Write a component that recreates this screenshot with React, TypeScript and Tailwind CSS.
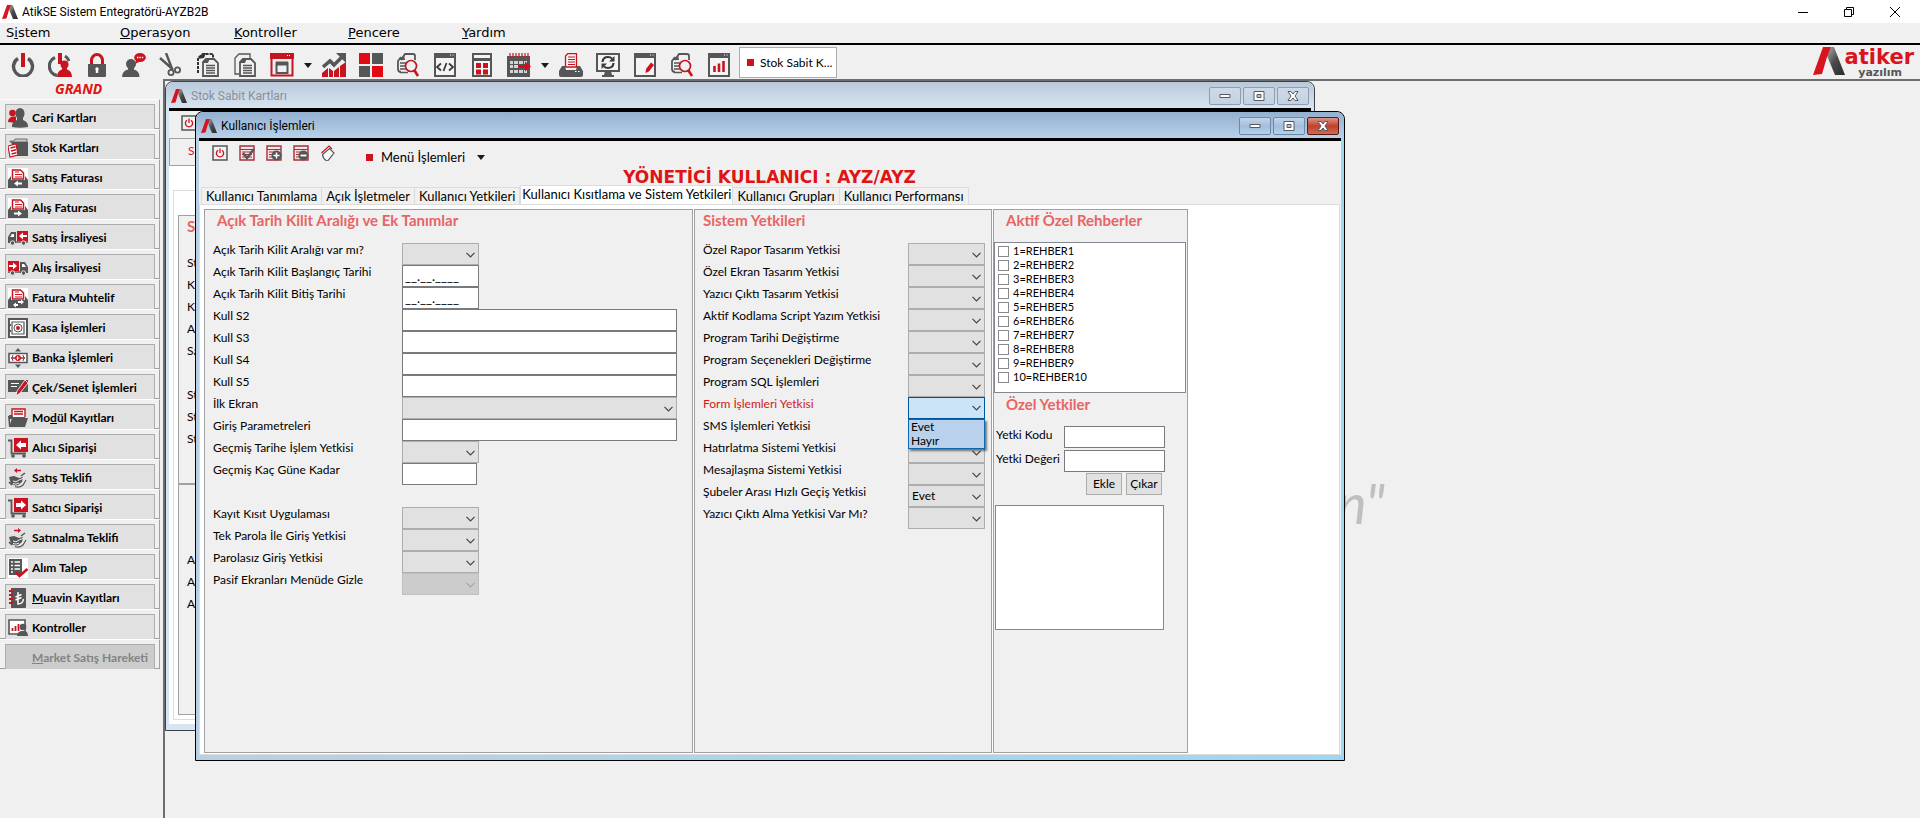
import { useState } from "react"
import type { ReactNode } from "react"

const GRAY = "#555657"
const RED = "#c8141f"

interface SvgProps {
    children: ReactNode
    size?: number
    box?: number
}

function Svg({ children, size = 24, box = 24 }: SvgProps) {
    return (
        <svg width={size} height={size} viewBox={`0 0 ${box} ${box}`} fill="none" aria-hidden="true" className="shrink-0">
            {children}
        </svg>
    )
}

function Mark({ width = 16, height = 14 }: { width?: number; height?: number }) {
    return (
        <svg width={width} height={height} viewBox="0 0 32 28" aria-hidden="true" className="shrink-0">
            <defs>
                <linearGradient id="markShade" x1="0" y1="0" x2="1" y2="1">
                    <stop offset="0" stopColor="#b9b9b9" />
                    <stop offset="0.5" stopColor="#4a4a4a" />
                    <stop offset="1" stopColor="#2b2b2b" />
                </linearGradient>
            </defs>
            <path d="M12 0h9l11 28H22L12 4z" fill="url(#markShade)" />
            <path d="M10 0h8l-4 10-5 17-9 1z" fill="#d8141f" />
        </svg>
    )
}

function Caret() {
    return (
        <svg width="8" height="5" viewBox="0 0 8 5" aria-hidden="true" className="shrink-0">
            <path d="M0 0h8L4 5z" fill="#1a1a1a" />
        </svg>
    )
}

// ---- main toolbar icons ----

const frame = <path d="M2 1h20v22H2z" stroke={GRAY} strokeWidth="2" fill="#f4f4f4" />
const frameTop = (
    <>
        <path d="M1 0h22v5H1z" fill={GRAY} />
        <path d="M17 2h1M19.500 2h1" stroke="#fff" strokeWidth="1" />
    </>
)
const sheets = (
    <>
        <path d="M10 6h8l4 4v13H7V9z" fill="#f0f0f0" stroke={GRAY} strokeWidth="1.800" />
        <path d="M6 10l4-5h4l-2 5z" fill={GRAY} />
        <path d="M10 12.500h9M10 15h9M10 17.500h9M10 20h9" stroke={GRAY} strokeWidth="1.500" />
    </>
)
const searchSheet = (
    <>
        <path d="M5 7l4-6h8q2 0 2 2v4M5 19q-3 0-3-3V8l3-4" stroke={GRAY} strokeWidth="1.800" />
        <path d="M3 7l5-5 1 5z" fill={GRAY} />
        <path d="M4 10h6M4 13h5M4 16h6M4 19.500h8" stroke={GRAY} strokeWidth="1.600" />
        <circle cx="15" cy="13" r="5.500" fill="#f0f0f0" stroke={RED} strokeWidth="1.700" />
        <path d="M18.500 17.500l3.500 5.500" stroke={RED} strokeWidth="2.600" />
    </>
)

const icons: Record<string, ReactNode> = {
    power: (
        <>
            <path d="M7 5.500a9.500 9.500 0 1 0 10 0" stroke={GRAY} strokeWidth="3.400" />
            <path d="M10 0h4v14h-4z" fill={RED} />
        </>
    ),
    userPower: (
        <>
            <path d="M7 4.500a9.500 9.500 0 0 0 2 18" stroke={GRAY} strokeWidth="3.200" />
            <path d="M10 0h4v11h-4z" fill={RED} />
            <path d="M17 3a9 9 0 0 1 4 5" stroke={GRAY} strokeWidth="3" />
            <circle cx="16.500" cy="11.500" r="4" fill={RED} />
            <path d="M9 24q0-6 5-7.500v-3h5v3q5 1.500 5 7.500z" fill={RED} />
        </>
    ),
    lock: (
        <>
            <path d="M6.500 12V7.500a5.500 6 0 0 1 11 0V12" stroke={RED} strokeWidth="3" />
            <path d="M3 11h18v12q0 1-1 1H4q-1 0-1-1z" fill={GRAY} />
            <path d="M10.800 17h2.400v3h-2.400z" fill="#fff" />
            <circle cx="12" cy="16" r="1.700" fill="#fff" />
        </>
    ),
    userChat: (
        <>
            <circle cx="9" cy="11" r="5" fill={GRAY} />
            <path d="M0 24q0-6 6-7.500V13h6v3.500q5.500 1.500 5.500 7.500z" fill={GRAY} />
            <ellipse cx="18" cy="4.500" rx="5.800" ry="4.500" fill={RED} />
            <path d="M14 7l-1 4 4-2z" fill={RED} />
            <path d="M15 4.500h1.400M17.400 4.500h1.400M19.800 4.500h1.400" stroke="#fff" strokeWidth="1.300" />
        </>
    ),
    cut: (
        <>
            <path d="M1 5l13 11.500M7 0l6.500 17" stroke={GRAY} strokeWidth="2.400" />
            <circle cx="12" cy="19.500" r="2.600" stroke={GRAY} strokeWidth="1.800" />
            <circle cx="18.500" cy="17" r="2.600" stroke={GRAY} strokeWidth="1.800" />
        </>
    ),
    copy: (
        <>
            <path d="M2 20V5l5-4h10v4" stroke="#333" strokeWidth="2" strokeDasharray="3 1" />
            <path d="M1 6l6-6h3L8 5z" fill="#333" />
            {sheets}
        </>
    ),
    paste: (
        <>
            <path d="M6 21H2V5l4-4h11v4" stroke={GRAY} strokeWidth="1.300" />
            {sheets}
        </>
    ),
    window: (
        <>
            <path d="M1.500 1.500h21v21h-21z" stroke={RED} strokeWidth="2" />
            <path d="M0 0h24v6H0z" fill={RED} />
            <path d="M17 2.500h1M19 2.500h1" stroke="#fff" />
            <path d="M6.500 10h11v10h-11z" stroke={GRAY} strokeWidth="2" />
            <path d="M6 8.500h12v4H6z" fill={GRAY} />
        </>
    ),
    trend: (
        <>
            <path d="M1 14L8 8l4 4 8-8" stroke={GRAY} strokeWidth="3.600" />
            <path d="M14 0h10v10z" fill={GRAY} />
            <path d="M0 24v-4l6-5v9zM7 24v-9l4 3v6zM12 24v-6l5-4v10zM18 24V13l6-4v15z" fill={RED} />
        </>
    ),
    tiles: (
        <>
            <path d="M0 0h11v11H0zM13 13h11v11H13z" fill="#df0a14" />
            <path d="M13 0h11v11H13zM0 13h11v11H0z" fill={GRAY} />
        </>
    ),
    search: searchSheet,
    code: (
        <>
            {frame}
            {frameTop}
            <path d="M8 10.500l-4 3.500 4 3.500M16 10.500l4 3.500-4 3.500M13.500 10l-3 8" stroke="#3a3a3a" strokeWidth="1.800" />
        </>
    ),
    calc: (
        <>
            <path d="M3 1h18v22H3z" fill="#f4f4f4" stroke={GRAY} strokeWidth="2" />
            <path d="M2 5h20v3H2z" fill={GRAY} />
            <path d="M6 10h5v5H6zM13 10h5v5h-5zM6 16.500h5v5H6zM13 16.500h5v5h-5z" fill={RED} />
        </>
    ),
    calendar: (
        <>
            <path d="M0 3h23v21H0z" fill={GRAY} />
            <path d="M3 0v4M6 0v4M9 0v4M12 0v4M15 0v4M18 0v4M21 0v4" stroke={RED} strokeWidth="1.200" />
            <path d="M3 8h3v3H3zM7 8h4v3H7zM12 8h4v3h-4zM17 8h3v3h-3zM3 12h3v3H3zM7 12h4v3H7zM3 17h3v3H3zM7 17h4v3H7zM12 17h4v3h-4zM17 17h3v3h-3z" fill="#d4d4d4" />
            <path d="M11 12h7V8.500l6 5-6 5V15h-7z" fill="#e30613" />
        </>
    ),
    printer: (
        <>
            <path d="M6.500 14V3l2.500-2.500h8.500V14z" fill="#f4f4f4" stroke={RED} strokeWidth="1.300" />
            <path d="M9 4h7M9 6.500h7M9 9h7M9 11.500h7" stroke={RED} strokeWidth="1.200" />
            <path d="M3 13h3l1 4h10l1-4h3l3 5v4q0 2-2 2H2q-2 0-2-2v-4z" fill={GRAY} />
            <path d="M16 18.500h1.500M19 18.500h1.500" stroke="#fff" />
        </>
    ),
    sync: (
        <>
            <path d="M1 1h22v17H1z" fill="#f4f4f4" stroke={GRAY} strokeWidth="2" />
            <path d="M9 18h6l1 4h2v2H6v-2h2z" fill={GRAY} />
            <path d="M6.500 9q.5-5 5.500-5 2.500 0 4 1.500M17.500 10q-.5 5-5.500 5-2.500 0-4-1.500" stroke="#3a3a3a" strokeWidth="2.200" />
            <path d="M18.500 3v5.500H13zM5.500 16v-5.500H11z" fill="#3a3a3a" />
        </>
    ),
    edit: (
        <>
            {frame}
            {frameTop}
            <path d="M18 9.500l3 2.500-5 6.500-3.500 1.500.5-4z" fill={RED} />
        </>
    ),
    report: (
        <>
            {frame}
            {frameTop}
            <path d="M7.500 19v-6M12 19V10.500M16.500 19V8" stroke={RED} strokeWidth="2.600" />
        </>
    ),
}

// ---- side menu icons, drawn on a 20 unit box ----

const receiptPrinter = (
    <>
        <path d="M0 0h20v20H0z" fill="#fff" />
        <path d="M4.500 11V2h8l3 3v6z" fill="#fff" stroke={RED} strokeWidth="1.500" />
        <path d="M7 4h4M7 6.500h7M7 9h7" stroke={RED} strokeWidth="1.200" />
        <path d="M0 20v-8l3-4v4h14V8l3 4v8z" fill={GRAY} />
    </>
)
const cart = (
    <>
        <path d="M0 2.500h3.500v13H18" stroke={GRAY} strokeWidth="1.800" />
        <circle cx="5" cy="18" r="1.800" fill={GRAY} />
        <circle cx="16" cy="18" r="1.800" fill={GRAY} />
        <path d="M6 0h14v14H6z" fill="#cf1020" />
    </>
)
const hands = (
    <>
        <path d="M1 9l5-1 5 2 4-1-1 5-5 4-6-2z" fill={GRAY} />
        <path d="M5 13q3 2 6-1l5-2M5 15.500q3 1.500 6-.5M8 18q5 1 9-6" stroke="#eee" strokeWidth="1" />
        <path d="M7 18.500q4 2 8-1.500l3-5" stroke={GRAY} strokeWidth="1.200" />
        <path d="M1 14l3 3M13 8l4-3" stroke={GRAY} strokeWidth="1.500" />
    </>
)
const truckWheels = (
    <>
        <path d="M0 14h20" stroke={GRAY} strokeWidth="1.500" />
        <circle cx="4.500" cy="15" r="2.200" fill={GRAY} stroke="#e0e0e0" />
        <circle cx="15.500" cy="15" r="2.200" fill={GRAY} stroke="#e0e0e0" />
    </>
)

const sideIcons: Record<string, ReactNode> = {
    people: (
        <>
            <circle cx="4.500" cy="5" r="3.300" fill={RED} />
            <path d="M0 14q0-4 4-5.500h4V15z" fill={RED} />
            <ellipse cx="12" cy="5.500" rx="4.500" ry="5.500" fill={GRAY} />
            <path d="M4 19q-.5-5 5-7V9h6v3q5.500 2 5 7-8 1.500-16 0z" fill={GRAY} />
        </>
    ),
    folder: (
        <>
            <path d="M2 3h4l1-2h12v3H2z" fill="#c9c9c9" stroke={GRAY} strokeWidth=".8" />
            <path d="M3 4h17v14H8z" fill={GRAY} />
            <path d="M0 8l8-2 2 11-8 2z" fill="#fff" stroke={RED} strokeWidth="1.200" />
            <path d="M2.500 10l5-1.200M3 13l5-1.200M3.500 16l5-1.200" stroke={RED} strokeWidth="1.400" />
        </>
    ),
    invoiceOut: (
        <>
            {receiptPrinter}
            <path d="M6 15.500l4-3v2h4v2h-4v2z" fill="#fff" />
        </>
    ),
    invoiceIn: (
        <>
            {receiptPrinter}
            <path d="M14 15.500l-4-3v2H6v2h4v2z" fill="#fff" />
        </>
    ),
    invoiceMisc: (
        <>
            {receiptPrinter}
            <path d="M10 13h3v-1.500l3 2.500-3 2.500V15h-3zM10 16H8v-1.500L5 17l3 2.500V18h2z" fill="#fff" />
        </>
    ),
    truckOut: (
        <>
            <path d="M9 3h11v10H9z" fill="#cf1020" />
            <path d="M11 8l4-3.500V7h4v2h-4v2.500z" fill="#fff" />
            <path d="M0 15V9l3-5h5v11z" fill={GRAY} />
            <path d="M2 9l2-3h2v3z" fill="#fff" />
            {truckWheels}
        </>
    ),
    truckIn: (
        <>
            <path d="M0 3h11v10H0z" fill="#cf1020" />
            <path d="M9 8L5 4.500V7H1v2h4v2.500z" fill="#fff" />
            <path d="M20 15V9l-3-5h-5v11z" fill={GRAY} />
            <path d="M18 9l-2-3h-2v3z" fill="#fff" />
            {truckWheels}
        </>
    ),
    safe: (
        <>
            <path d="M1 1h18v18H1z" fill="#fff" stroke={GRAY} strokeWidth="2" />
            <path d="M4 4h12v12H4z" stroke={GRAY} strokeWidth="1.200" />
            <circle cx="10" cy="10" r="4" fill="#fff" stroke={GRAY} strokeWidth="1" />
            <path d="M8.500 8.500l3 3M11.500 8.500l-3 3" stroke={RED} strokeWidth="1.800" />
            <path d="M2.500 6v2M2.500 12v2" stroke={GRAY} />
        </>
    ),
    bank: (
        <>
            <path d="M10 0l3 3.500H7zM10 20l3-3.500H7z" fill={GRAY} />
            <path d="M1 5.500h18v9H1z" fill="#fff" stroke={GRAY} strokeWidth="1.600" />
            <path d="M3 10q1.500 0 2-3M17 10q-1.500 0-2-3M3 10q1.500 0 2 3M17 10q-1.500 0-2 3" stroke={GRAY} />
            <circle cx="10" cy="10" r="3" fill={RED} />
            <path d="M4 10h3M13 10h3" stroke={RED} strokeWidth="1.500" />
            <path d="M9.500 8v4M8.500 10h3" stroke="#fff" strokeWidth=".8" />
        </>
    ),
    cheque: (
        <>
            <path d="M0 2h20v12H0z" fill={GRAY} />
            <path d="M3 5.500h8M3 8.500h6" stroke="#fff" strokeWidth="1.200" />
            <path d="M17 2l3 3-8 10-4 3 1-5z" fill={RED} stroke="#fff" strokeWidth=".8" />
        </>
    ),
    module: (
        <>
            <path d="M4 9V1h13v8" fill="#fff" stroke={RED} strokeWidth="1.400" />
            <path d="M6 3.500h9M6 6h9" stroke={RED} strokeWidth="1.400" />
            <path d="M1 7h3l1 2h12v2H1z" fill={GRAY} />
            <path d="M1 19l3-9h16l-3 9z" fill={GRAY} />
            <path d="M0 8h2v11H1z" fill={GRAY} />
        </>
    ),
    cartIn: (
        <>
            {cart}
            <path d="M8 7l5-4.500V5h5v4h-5v2.500z" fill="#fff" />
        </>
    ),
    cartOut: (
        <>
            {cart}
            <path d="M18 7l-5-4.500V5H8v4h5v2.500z" fill="#fff" />
        </>
    ),
    offerOut: (
        <>
            {hands}
            <path d="M6 2.500l3-2.500v1.700h4v1.600H9V5z" fill={RED} />
        </>
    ),
    offerIn: (
        <>
            {hands}
            <path d="M13 2.500L10 0v1.700H6v1.600h4V5z" fill={RED} />
        </>
    ),
    request: (
        <>
            <path d="M0 0h20v20H0z" fill="#fff" />
            <path d="M1 1h13v16H1z" fill={GRAY} />
            <path d="M3 4h2M6.500 4H12M3 7.500h2M6.500 7.500H12M3 11h2M6.500 11H12M3 14h2" stroke="#fff" strokeWidth="1.400" />
            <path d="M8 14.500l3.500 3.500 8-7" stroke={RED} strokeWidth="2.600" />
        </>
    ),
    ledger: (
        <>
            <path d="M3 0h14q1 0 1 1v18q0 1-1 1H3z" fill={GRAY} />
            <path d="M1 3h4M1 7h4M1 11h4M1 15h4" stroke={RED} strokeWidth="1.800" />
            <path d="M10 4v12q5 0 5.500-5M7.500 9l6-2.500M7.500 12l6-2.500" stroke="#fff" strokeWidth="1.500" />
        </>
    ),
    control: (
        <>
            <path d="M1 2h16v14H1z" fill="#fff" stroke={GRAY} strokeWidth="1.600" />
            <path d="M4.500 13v-3M7.500 13V8M10.500 13V6" stroke={RED} strokeWidth="1.800" />
            <circle cx="15" cy="9" r="3.300" fill={GRAY} />
            <path d="M9 18q0-4 4-5h4q3 1 3 5z" fill={GRAY} />
        </>
    ),
}

// ---- small form toolbar icons, 16 unit box ----

const gridSheet = (
    <>
        <path d="M1 1h14v14H1z" fill="#f6e3e3" stroke="#a3303a" strokeWidth="1.400" />
        <path d="M1 4.500h14M3 7h10M3 9.500h10M3 12h10" stroke="#a3303a" strokeWidth="1.200" />
    </>
)
const formPower = (
    <>
        <path d="M1 1h14v14H1z" stroke={GRAY} strokeWidth="1.500" />
        <path d="M6 5.200a3.600 3.600 0 1 0 4 0M8 3.500V8" stroke={RED} strokeWidth="1.300" />
    </>
)
const formIcons: { label: string; icon: ReactNode }[] = [
    { label: "Kapat", icon: formPower },
    {
        label: "Kaydet",
        icon: (
            <>
                {gridSheet}
                <path d="M4 8l4 5 7-9" stroke={GRAY} strokeWidth="2.400" />
            </>
        ),
    },
    {
        label: "Ekle",
        icon: (
            <>
                {gridSheet}
                <circle cx="10.500" cy="10.500" r="5" fill={GRAY} />
                <path d="M7.500 10.500h6M10.500 7.500v6" stroke="#fff" strokeWidth="1.500" />
            </>
        ),
    },
    {
        label: "Sil",
        icon: (
            <>
                {gridSheet}
                <circle cx="10.500" cy="10.500" r="5" fill={GRAY} />
                <path d="M7.500 10.500h6" stroke="#fff" strokeWidth="1.800" />
            </>
        ),
    },
    {
        label: "Temizle",
        icon: (
            <>
                <path d="M1.500 8l7.500-7 3 3" stroke={RED} strokeWidth="1.200" />
                <path d="M2.500 9.500l7-6 4.500 4.500-6 7.500q-1 .5-2 0-3-2-3.500-6z" fill="#f8f8f8" stroke={GRAY} strokeWidth="1.200" />
            </>
        ),
    },
]

const menus: [string, string, string][] = [
    ["S", "i", "stem"],
    ["", "O", "perasyon"],
    ["", "K", "ontroller"],
    ["", "P", "encere"],
    ["", "Y", "ardım"],
]

const toolbar: { id: string; label: string; menu?: boolean }[] = [
    { id: "power", label: "Çıkış" },
    { id: "userPower", label: "Oturumu kapat" },
    { id: "lock", label: "Kilitle" },
    { id: "userChat", label: "Mesaj" },
    { id: "cut", label: "Kes" },
    { id: "copy", label: "Kopyala" },
    { id: "paste", label: "Yapıştır" },
    { id: "window", label: "Pencereler", menu: true },
    { id: "trend", label: "Grafik" },
    { id: "tiles", label: "Modüller" },
    { id: "search", label: "Rapor ara" },
    { id: "code", label: "Script" },
    { id: "calc", label: "Hesap makinesi" },
    { id: "calendar", label: "Takvim", menu: true },
    { id: "printer", label: "Yazdır" },
    { id: "sync", label: "Güncelle" },
    { id: "edit", label: "Düzenle" },
    { id: "search", label: "İncele" },
    { id: "report", label: "Raporlar" },
]

const sideItems: { icon?: string; text: string; key?: string; disabled?: boolean }[] = [
    { icon: "people", text: "Cari Kartları" },
    { icon: "folder", text: "Stok Kartları" },
    { icon: "invoiceOut", text: "Satış Faturası" },
    { icon: "invoiceIn", text: "Alış Faturası" },
    { icon: "truckOut", text: "Satış İrsaliyesi" },
    { icon: "truckIn", text: "Alış İrsaliyesi" },
    { icon: "invoiceMisc", text: "Fatura Muhtelif" },
    { icon: "safe", text: "Kasa İşlemleri" },
    { icon: "bank", text: "Banka İşlemleri" },
    { icon: "cheque", text: "Çek/Senet İşlemleri" },
    { icon: "module", text: "Modül Kayıtları", key: "d" },
    { icon: "cartIn", text: "Alıcı Siparişi" },
    { icon: "offerOut", text: "Satış Teklifi" },
    { icon: "cartOut", text: "Satıcı Siparişi" },
    { icon: "offerIn", text: "Satınalma Teklifi" },
    { icon: "request", text: "Alım Talep" },
    { icon: "ledger", text: "Muavin Kayıtları", key: "M" },
    { icon: "control", text: "Kontroller" },
    { text: "Market Satış Hareketi", key: "M", disabled: true },
]

const tabs = [
    "Kullanıcı Tanımlama",
    "Açık İşletmeler",
    "Kullanıcı Yetkileri",
    "Kullanıcı Kısıtlama ve Sistem Yetkileri",
    "Kullanıcı Grupları",
    "Kullanıcı Performansı",
]

type Field = { label: string; kind: "select" | "wideSelect" | "date" | "text" | "short" | "off" } | null

const lockFields: Field[] = [
    { label: "Açık Tarih Kilit Aralığı var mı?", kind: "select" },
    { label: "Açık Tarih Kilit Başlangıç Tarihi", kind: "date" },
    { label: "Açık Tarih Kilit Bitiş Tarihi", kind: "date" },
    { label: "Kull S2", kind: "text" },
    { label: "Kull S3", kind: "text" },
    { label: "Kull S4", kind: "text" },
    { label: "Kull S5", kind: "text" },
    { label: "İlk Ekran", kind: "wideSelect" },
    { label: "Giriş Parametreleri", kind: "text" },
    { label: "Geçmiş Tarihe İşlem Yetkisi", kind: "select" },
    { label: "Geçmiş Kaç Güne Kadar", kind: "short" },
    null,
    { label: "Kayıt Kısıt Uygulaması", kind: "select" },
    { label: "Tek Parola İle Giriş Yetkisi", kind: "select" },
    { label: "Parolasız Giriş Yetkisi", kind: "select" },
    { label: "Pasif Ekranları Menüde Gizle", kind: "off" },
]

const systemRights = [
    "Özel Rapor Tasarım Yetkisi",
    "Özel Ekran Tasarım Yetkisi",
    "Yazıcı Çıktı Tasarım Yetkisi",
    "Aktif Kodlama Script Yazım Yetkisi",
    "Program Tarihi Değiştirme",
    "Program Seçenekleri Değiştirme",
    "Program SQL İşlemleri",
    "Form İşlemleri Yetkisi",
    "SMS İşlemleri Yetkisi",
    "Hatırlatma Sistemi Yetkisi",
    "Mesajlaşma Sistemi Yetkisi",
    "Şubeler Arası Hızlı Geçiş Yetkisi",
    "Yazıcı Çıktı Alma Yetkisi Var Mı?",
]

const guides = Array.from({ length: 10 }, (_, i) => `${i + 1}=REHBER${i + 1}`)

// underline the access key inside a caption
function Caption({ text, accessKey }: { text: string; accessKey?: string }) {
    const at = accessKey ? text.indexOf(accessKey) : -1
    if (at < 0) return <span>{text}</span>
    return (
        <span>
            {text.slice(0, at)}
            <u>{text[at]}</u>
            {text.slice(at + 1)}
        </span>
    )
}

function Select({ id, className, value = "", disabled }: { id: string; className: string; value?: string; disabled?: boolean }) {
    return (
        <span className={`relative block h-[22px] ${className}`}>
            <select
                id={id}
                disabled={disabled}
                defaultValue={value}
                className="block w-full h-full appearance-none border border-[#adadad] bg-[#e1e1e1] pl-[3px] text-black outline-none disabled:bg-[#cccccc] disabled:border-[#bfbfbf] disabled:opacity-100"
            >
                <option value=""></option>
                <option value="Evet">Evet</option>
                <option value="Hayır">Hayır</option>
            </select>
            <svg
                width="9"
                height="6"
                viewBox="0 0 9 6"
                fill="none"
                aria-hidden="true"
                className="absolute right-1 top-[9px] pointer-events-none"
            >
                <path d="M.5.800l4 4 4-4" stroke={disabled ? "#a6a6a6" : "#444"} strokeWidth="1.200" />
            </svg>
        </span>
    )
}

function WindowButtons({ active }: { active: boolean }) {
    const tone = active
        ? "border-[#6d87a8] bg-linear-to-b from-[#c3d6ea] via-[#a4bedb] to-[#b4cfea]"
        : "border-[#8d9db3] bg-linear-to-b from-[#cfdae6] to-[#c3d1e1]"
    const close = active ? "border-[#5a1a14] bg-linear-to-b from-[#dc9388] via-[#c0402c] to-[#cf6a50]" : tone
    const box = "w-8 h-[18px] flex items-center justify-center rounded-xs border"
    return (
        <div className="flex gap-0.5">
            <button aria-label="Simge durumuna küçült" className={`${box} ${tone}`}>
                <svg width="12" height="6" viewBox="0 0 12 6"><path d="M1 1.500h10v3H1z" fill="#fff" stroke="#555b66" /></svg>
            </button>
            <button aria-label="Ekranı kapla" className={`${box} ${tone}`}>
                <svg width="12" height="10" viewBox="0 0 12 10">
                    <path d="M1 .500h10v9H1z" fill="#fff" stroke="#555b66" />
                    <path d="M4 3.500h4v3H4z" fill="#b4c8de" stroke="#555b66" />
                </svg>
            </button>
            <button aria-label="Kapat" className={`${box} ${close}`}>
                <svg width="12" height="10" viewBox="0 0 12 10">
                    <path d="M1 .500h3l2 2.500 2-2.500h3L8 5l3 4.500H8L6 7 4 9.500H1L4 5z" fill="#fff" stroke="#555b66" />
                </svg>
            </button>
        </div>
    )
}

function Heading({ children, className = "" }: { children: ReactNode; className?: string }) {
    return <h2 className={`text-[15px] leading-5 font-bold text-[#e86464] ${className}`}>{children}</h2>
}

// stock card form, mostly hidden behind the active window
function StockWindow() {
    return (
        <section className="absolute left-0 top-0 w-[1150px] h-[650px] flex flex-col rounded-t-lg border border-[#3c4148] bg-[#d7e4f2] px-[3px] pb-1.5">
            <header className="h-[26px] shrink-0 flex items-center -mx-[3px] pl-[5px] pr-[5px] pt-0.5 rounded-t-lg bg-linear-to-b from-[#b9c9da] to-[#d8e4f1]">
                <Mark />
                <h2 className="flex-1 pl-1 text-xs text-[#8a8f96] font-['Roboto','Noto_Sans',sans-serif]">Stok Sabit Kartları</h2>
                <WindowButtons active={false} />
            </header>
            <div className="flex-1 flex flex-col border-t-[3px] border-black bg-[#f0f0f0]">
                <div className="h-[27px] pl-3 pt-1">
                    <Svg size={16} box={16}>{formPower}</Svg>
                </div>
                <div className="h-7 border border-[#a0a0a0] pl-[18px] text-xs leading-6 text-[#d02028]">S</div>
                <div className="flex-1 bg-white pt-6 pl-1 pb-1">
                    <div className="h-full flex flex-col border border-[#dcdcdc] pt-6 pl-1 pb-1">
                        <div className="h-[269px] border border-[#a0a0a0] bg-[#f0f0f0] pl-2">
                            <Heading>S</Heading>
                            <div className="pt-4 text-xs leading-[22px]">
                                {["St", "Kr", "Ka", "A", "Sa", "", "St", "St", "St"].map((text, i) => (
                                    <p key={i} className="h-[22px]">{text}</p>
                                ))}
                            </div>
                        </div>
                        <div className="flex-1 border border-[#a0a0a0] bg-[#f0f0f0] pl-2 pt-16 text-xs leading-[22px]">
                            {["A", "A", "A"].map((text, i) => (
                                <p key={i}>{text}</p>
                            ))}
                        </div>
                    </div>
                </div>
            </div>
        </section>
    )
}

function LockPanel() {
    return (
        <section className="w-[489px] border border-[#a0a0a0] bg-[#f0f0f0] pl-2">
            <Heading className="pl-1">Açık Tarih Kilit Aralığı ve Ek Tanımlar</Heading>
            <div className="pt-[13px]">
                {lockFields.map((field, i) => {
                    if (!field) return <div key={i} className="h-[22px]" />
                    const id = `kilit-${i}`
                    const input = "block h-[22px] border border-[#7a7a7a] bg-white px-0.5 outline-none"
                    return (
                        <div key={i} className="flex h-[22px]">
                            <label htmlFor={id} className="w-[189px] leading-[14px]">{field.label}</label>
                            {field.kind === "select" && <Select id={id} className="w-[77px]" />}
                            {field.kind === "off" && <Select id={id} className="w-[77px]" disabled />}
                            {field.kind === "wideSelect" && <Select id={id} className="w-[275px]" />}
                            {field.kind === "date" && <input id={id} defaultValue="__.__.____" className={`${input} w-[77px] text-[13px]`} />}
                            {field.kind === "text" && <input id={id} className={`${input} w-[275px]`} />}
                            {field.kind === "short" && <input id={id} className={`${input} w-[75px]`} />}
                        </div>
                    )
                })}
            </div>
        </section>
    )
}

function SystemPanel() {
    const [open, setOpen] = useState(true)
    const [right, setRight] = useState("")

    const pick = (value: string) => {
        setRight(value)
        setOpen(false)
    }

    return (
        <section className="w-[298px] border border-[#a0a0a0] bg-[#f0f0f0] pl-2">
            <Heading>Sistem Yetkileri</Heading>
            <div className="pt-[13px]">
                {systemRights.map((label, i) => {
                    const id = `sistem-${i}`
                    if (label !== "Form İşlemleri Yetkisi") {
                        return (
                            <div key={label} className="flex h-[22px]">
                                <label htmlFor={id} className="w-[205px] leading-[14px]">{label}</label>
                                <Select id={id} className="w-[77px]" value={label.startsWith("Şubeler") ? "Evet" : ""} />
                            </div>
                        )
                    }
                    return (
                        <div key={label} className="flex h-[22px]">
                            <label htmlFor={id} className="w-[205px] leading-[14px] text-[#d01820]">{label}</label>
                            <div className="relative w-[77px]">
                                <button
                                    id={id}
                                    onClick={() => setOpen(!open)}
                                    className="w-full h-[22px] flex items-center justify-between border border-[#005499] bg-[#cce4f7] pl-[3px] pr-[3px]"
                                >
                                    <span>{right}</span>
                                    <svg width="9" height="6" viewBox="0 0 9 6" fill="none" aria-hidden="true">
                                        <path d="M.5.800l4 4 4-4" stroke="#444" strokeWidth="1.200" />
                                    </svg>
                                </button>
                                {open && (
                                    <ul className="absolute left-0 top-[22px] z-10 w-full border border-[#0f66ad] bg-[#b9d1ea] pl-0.5 leading-[14px] shadow-[2px_2px_2px_rgba(0,0,0,0.5)]">
                                        {["Evet", "Hayır"].map((value) => (
                                            <li key={value}>
                                                <button onClick={() => pick(value)} className="block w-full text-left">{value}</button>
                                            </li>
                                        ))}
                                    </ul>
                                )}
                            </div>
                        </div>
                    )
                })}
            </div>
        </section>
    )
}

function GuidePanel() {
    const input = "w-[101px] h-[22px] border border-[#7a7a7a] bg-white px-0.5 outline-none"
    const button = "w-9 h-[22px] border border-[#adadad] bg-[#e1e1e1] text-center"
    return (
        <section className="w-[195px] border border-[#a0a0a0] bg-[#f0f0f0] pr-px">
            <Heading className="pl-3">Aktif Özel Rehberler</Heading>
            <div className="mt-3 h-[151px] border border-[#828790] bg-white pl-[3px] pt-px">
                {guides.map((guide) => (
                    <label key={guide} className="flex h-[14px] items-center gap-1 text-[11px] leading-[14px]">
                        <input type="checkbox" className="size-[11px] appearance-none border border-[#8a8a8a] bg-white checked:bg-[#7aa7d8]" />
                        {guide}
                    </label>
                ))}
            </div>
            <Heading className="pl-3 pt-px">Özel Yetkiler</Heading>
            <div className="flex flex-col gap-0.5 pl-0.5 pt-3">
                <div className="flex">
                    <label htmlFor="yetki-kodu" className="w-[68px] whitespace-nowrap leading-[18px]">Yetki Kodu</label>
                    <input id="yetki-kodu" className={input} />
                </div>
                <div className="flex">
                    <label htmlFor="yetki-degeri" className="w-[68px] whitespace-nowrap leading-[18px]">Yetki Değeri</label>
                    <input id="yetki-degeri" className={input} />
                </div>
            </div>
            <div className="flex gap-1 pl-[92px] pt-px">
                <button className={button}>Ekle</button>
                <button className={button}>Çıkar</button>
            </div>
            <textarea aria-label="Özel Yetkiler" className="ml-px mt-2.5 block w-[169px] h-[125px] resize-none border border-[#828790] bg-white outline-none" />
        </section>
    )
}

function UserWindow() {
    const [tab, setTab] = useState(3)

    return (
        <section className="absolute left-[30px] top-[30px] w-[1150px] h-[650px] flex flex-col rounded-t-lg border border-black bg-linear-to-r from-[#b9cfe4] to-[#9bd9f2] px-[3px] pb-[5px]">
            <header className="h-[26px] shrink-0 flex items-center -mx-[3px] pl-[5px] pr-[5px] pt-0.5 rounded-t-lg bg-linear-to-b from-[#93b0cf] to-[#b9d1ea]">
                <Mark />
                <h2 className="flex-1 pl-1 text-xs font-['Roboto','Noto_Sans',sans-serif]">Kullanıcı İşlemleri</h2>
                <WindowButtons active />
            </header>
            <div className="flex-1 min-h-0 flex flex-col border-t-[3px] border-black bg-[#f0f0f0] pr-px">
                <div className="flex h-6 items-start pl-[13px] pt-1">
                    <div className="flex gap-[11px]">
                        {formIcons.map(({ label, icon }) => (
                            <button key={label} aria-label={label}>
                                <Svg size={16} box={16}>{icon}</Svg>
                            </button>
                        ))}
                    </div>
                    <button className="ml-[30px] mt-1 flex items-center gap-2 text-[13px] leading-4">
                        <span className="size-[7px] bg-[#d0101c]" />
                        Menü İşlemleri
                        <span className="pl-1"><Caret /></span>
                    </button>
                </div>
                <h1 className="h-5 text-center text-[17px] leading-6 font-bold text-[#e01414] font-['DejaVu_Sans',sans-serif]">
                    YÖNETİCİ KULLANICI : AYZ/AYZ
                </h1>
                <div role="tablist" className="flex items-end pl-0.5 text-[13px]">
                    {tabs.map((name, i) => (
                        <button
                            key={name}
                            role="tab"
                            aria-selected={tab === i}
                            onClick={() => setTab(i)}
                            className={
                                tab === i
                                    ? "h-[19px] border border-b-0 border-[#dcdcdc] bg-white px-px pb-0.5 leading-4"
                                    : "h-[17px] border-t border-r first:border-l border-[#dcdcdc] bg-[#f0f0f0] px-1 leading-4"
                            }
                        >
                            {name}
                        </button>
                    ))}
                </div>
                <div className="flex-1 flex gap-px border border-[#dcdcdc] bg-white px-1 pt-1 pb-px">
                    <LockPanel />
                    <SystemPanel />
                    <GuidePanel />
                </div>
            </div>
        </section>
    )
}

export default function App() {
    return (
        <div className="h-screen min-h-[600px] flex flex-col overflow-hidden bg-[#f0f0f0] text-xs text-black font-['Lato','Liberation_Sans',sans-serif]">
            {/* Title bar */}
            <header className="h-[23px] shrink-0 flex items-center bg-white pl-0.5 pr-5">
                <Mark />
                <span className="flex-1 pl-1 font-['Roboto','Noto_Sans',sans-serif]">AtikSE Sistem Entegratörü-AYZB2B</span>
                <div className="flex gap-9">
                    <button aria-label="Simge durumuna küçült">
                        <svg width="10" height="10" viewBox="0 0 10 10"><path d="M0 5.500h10" stroke="#000" /></svg>
                    </button>
                    <button aria-label="Önceki boyut">
                        <svg width="10" height="10" viewBox="0 0 10 10" fill="none">
                            <path d="M.500 2.500h7v7h-7zM2.500 2.500v-2h7v7h-2" stroke="#000" />
                        </svg>
                    </button>
                    <button aria-label="Kapat">
                        <svg width="10" height="10" viewBox="0 0 10 10"><path d="M0 0l10 10M10 0L0 10" stroke="#000" /></svg>
                    </button>
                </div>
            </header>

            {/* Menu */}
            <nav className="h-5 shrink-0 flex pl-1.5 text-[13px] leading-[18px] font-['DejaVu_Sans',sans-serif]">
                {menus.map(([before, key, after]) => (
                    <button key={after} className="w-[114px] text-left">
                        {before}
                        <u>{key}</u>
                        {after}
                    </button>
                ))}
            </nav>

            {/* Toolbar */}
            <div className="h-9 shrink-0 flex items-start border-t-2 border-black pl-1 pr-1.5 pt-0.5">
                <div className="flex pt-1.5">
                    {toolbar.map(({ id, label, menu }) => (
                        <div key={label} className="flex">
                            <button aria-label={label} className="w-[37px] flex justify-center">
                                <Svg>{icons[id]}</Svg>
                            </button>
                            {menu && (
                                <button aria-label={`${label} menüsü`} className="w-[15px] flex items-center justify-center">
                                    <Caret />
                                </button>
                            )}
                        </div>
                    ))}
                </div>
                <button className="ml-0.5 w-[98px] h-[31px] flex items-center gap-1.5 border border-[#adadad] bg-white pl-[7px] whitespace-nowrap">
                    <span className="size-[7px] bg-[#d0101c]" />
                    Stok Sabit K...
                </button>
                <div className="flex-1" />
                <Mark width={32} height={28} />
                <div className="flex flex-col items-end font-bold font-['DejaVu_Sans',sans-serif]">
                    <span className="text-[21px] leading-5 text-[#d8141f]">atiker</span>
                    <span className="pr-3 text-[11px] leading-3 text-[#555657]">yazılım</span>
                </div>
            </div>

            <div className="flex-1 min-h-0 flex">
                {/* Side menu */}
                <aside className="w-[163px] shrink-0">
                    <p className="h-5 pt-0.5 pl-[55px] text-sm leading-4 font-bold italic text-[#e01414] font-['Noto_Sans','Open_Sans',sans-serif]">
                        GRAND
                    </p>
                    {sideItems.map(({ icon, text, key, disabled }) => (
                        <div key={text} className="w-40 h-[30px] border-t border-t-white border-r border-r-[#a0a0a0] border-b border-b-[#a0a0a0] pl-[5px] pr-1 pt-1">
                            <button
                                disabled={disabled}
                                className="w-full h-[25px] flex items-center gap-1 border border-b-0 border-[#adadad] bg-[#e1e1e1] pl-0.5 pt-0.5 whitespace-nowrap font-bold disabled:bg-[#cccccc] disabled:text-[#838383]"
                            >
                                <Svg size={20} box={20}>{icon ? sideIcons[icon] : null}</Svg>
                                <Caption text={text} accessKey={key} />
                            </button>
                        </div>
                    ))}
                </aside>

                {/* Desktop */}
                <main className="relative flex-1 overflow-hidden border-l-2 border-t-2 border-[#6b6e73]">
                    <p className="absolute left-[1172px] top-[388px] text-[56px] leading-[68px] italic text-[#bfbfbf]">n"</p>
                    <StockWindow />
                    <UserWindow />
                </main>
            </div>
        </div>
    )
}
